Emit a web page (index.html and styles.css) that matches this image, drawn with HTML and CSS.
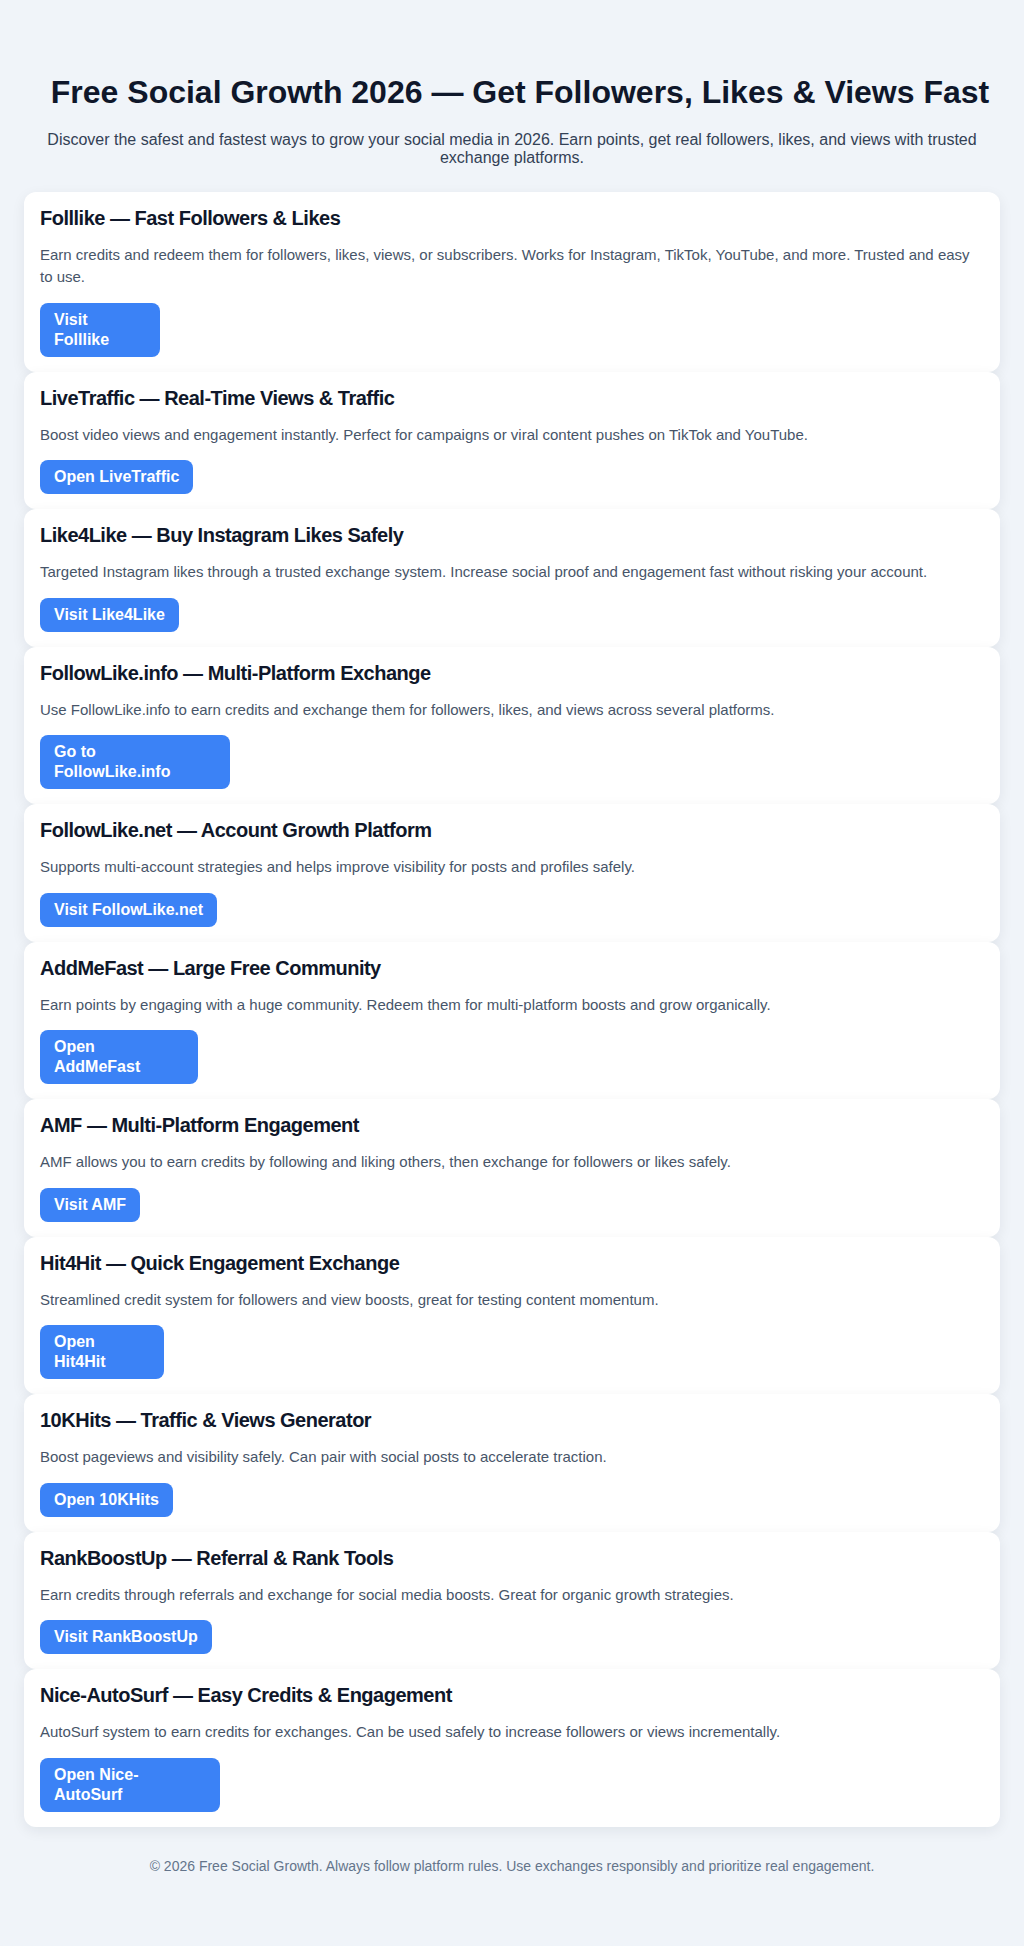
FILE: index.html
```html
<!DOCTYPE html>
<html lang="en">
<head>
<meta charset="utf-8">
<title>Free Social Growth 2026 — Get Followers, Likes &amp; Views Fast</title>
<link rel="stylesheet" href="styles.css">
</head>
<body>
<div class="page">
  <header class="hero">
    <h1 class="hero-title">Free Social Growth 2026 — Get Followers, Likes &amp; Views Fast</h1>
    <p class="hero-sub">Discover the safest and fastest ways to grow your social media in 2026. Earn points, get real followers, likes, and views with trusted exchange platforms.</p>
  </header>

  <main class="list">
    <section class="card">
      <h2 class="card-title">Folllike — Fast Followers &amp; Likes</h2>
      <p class="card-text">Earn credits and redeem them for followers, likes, views, or subscribers. Works for Instagram, TikTok, YouTube, and more. Trusted and easy to use.</p>
      <a class="btn btn--tight" href="#"><span class="btn-label">Visit Folllike</span></a>
    </section>
    <section class="card">
      <h2 class="card-title">LiveTraffic — Real-Time Views &amp; Traffic</h2>
      <p class="card-text">Boost video views and engagement instantly. Perfect for campaigns or viral content pushes on TikTok and YouTube.</p>
      <a class="btn" href="#"><span class="btn-label">Open LiveTraffic</span></a>
    </section>
    <section class="card">
      <h2 class="card-title">Like4Like — Buy Instagram Likes Safely</h2>
      <p class="card-text">Targeted Instagram likes through a trusted exchange system. Increase social proof and engagement fast without risking your account.</p>
      <a class="btn" href="#"><span class="btn-label">Visit Like4Like</span></a>
    </section>
    <section class="card">
      <h2 class="card-title">FollowLike.info — Multi-Platform Exchange</h2>
      <p class="card-text">Use FollowLike.info to earn credits and exchange them for followers, likes, and views across several platforms.</p>
      <a class="btn btn--tight" href="#"><span class="btn-label">Go to FollowLike.info</span></a>
    </section>
    <section class="card">
      <h2 class="card-title">FollowLike.net — Account Growth Platform</h2>
      <p class="card-text">Supports multi-account strategies and helps improve visibility for posts and profiles safely.</p>
      <a class="btn" href="#"><span class="btn-label">Visit FollowLike.net</span></a>
    </section>
    <section class="card">
      <h2 class="card-title">AddMeFast — Large Free Community</h2>
      <p class="card-text">Earn points by engaging with a huge community. Redeem them for multi-platform boosts and grow organically.</p>
      <a class="btn btn--tight" href="#"><span class="btn-label">Open AddMeFast</span></a>
    </section>
    <section class="card">
      <h2 class="card-title">AMF — Multi-Platform Engagement</h2>
      <p class="card-text">AMF allows you to earn credits by following and liking others, then exchange for followers or likes safely.</p>
      <a class="btn" href="#"><span class="btn-label">Visit AMF</span></a>
    </section>
    <section class="card">
      <h2 class="card-title">Hit4Hit — Quick Engagement Exchange</h2>
      <p class="card-text">Streamlined credit system for followers and view boosts, great for testing content momentum.</p>
      <a class="btn btn--tight" href="#"><span class="btn-label">Open Hit4Hit</span></a>
    </section>
    <section class="card">
      <h2 class="card-title">10KHits — Traffic &amp; Views Generator</h2>
      <p class="card-text">Boost pageviews and visibility safely. Can pair with social posts to accelerate traction.</p>
      <a class="btn" href="#"><span class="btn-label">Open 10KHits</span></a>
    </section>
    <section class="card">
      <h2 class="card-title">RankBoostUp — Referral &amp; Rank Tools</h2>
      <p class="card-text">Earn credits through referrals and exchange for social media boosts. Great for organic growth strategies.</p>
      <a class="btn" href="#"><span class="btn-label">Visit RankBoostUp</span></a>
    </section>
    <section class="card">
      <h2 class="card-title">Nice-AutoSurf — Easy Credits &amp; Engagement</h2>
      <p class="card-text">AutoSurf system to earn credits for exchanges. Can be used safely to increase followers or views incrementally.</p>
      <a class="btn btn--tight" href="#"><span class="btn-label">Open Nice-AutoSurf</span></a>
    </section>
  </main>

  <footer class="footer">© 2026 Free Social Growth. Always follow platform rules. Use exchanges responsibly and prioritize real engagement.</footer>
</div>
</body>
</html>
```

FILE: styles.css
```css
* { box-sizing: border-box; }

html, body {
  margin: 0;
  padding: 0;
  background: #f0f4f9;
}

body {
  font-family: "Liberation Sans", Arial, Helvetica, sans-serif;
  color: #0f172a;
}

.page {
  padding: 0 24px;
}

.hero {
  padding: 74px 0 24px;
  text-align: center;
}

.hero-title {
  margin: 0 0 20px;
  padding-left: 16px;
  font-size: 32px;
  line-height: 1.15;
  font-weight: 700;
  color: #0f172a;
}

.hero-sub {
  margin: 0;
  font-size: 16px;
  line-height: 1.15;
  color: #334155;
}

.list {
  display: flex;
  flex-direction: column;
}

.card {
  background: #ffffff;
  border-radius: 12px;
  padding: 14px 16px 15px;
  box-shadow: 0 4px 14px rgba(15, 23, 42, 0.07);
}

.card-title {
  margin: 0 0 14px;
  font-size: 20px;
  line-height: 24px;
  font-weight: 700;
  letter-spacing: -0.025em;
  color: #0f172a;
}

.card-text {
  margin: 0 0 14px;
  font-size: 15px;
  line-height: 22.5px;
  color: #475569;
}

.btn {
  display: inline-block;
  vertical-align: top;
  padding: 7px 14px;
  border-radius: 8px;
  background: #3b82f6;
  color: #ffffff;
  font-size: 16px;
  line-height: 20px;
  font-weight: 700;
  text-decoration: none;
}

.btn--tight .btn-label {
  margin-right: -1px;
}

.footer {
  padding: 31px 0 0;
  text-align: center;
  font-size: 14px;
  line-height: 1.15;
  color: #64748b;
}
```
